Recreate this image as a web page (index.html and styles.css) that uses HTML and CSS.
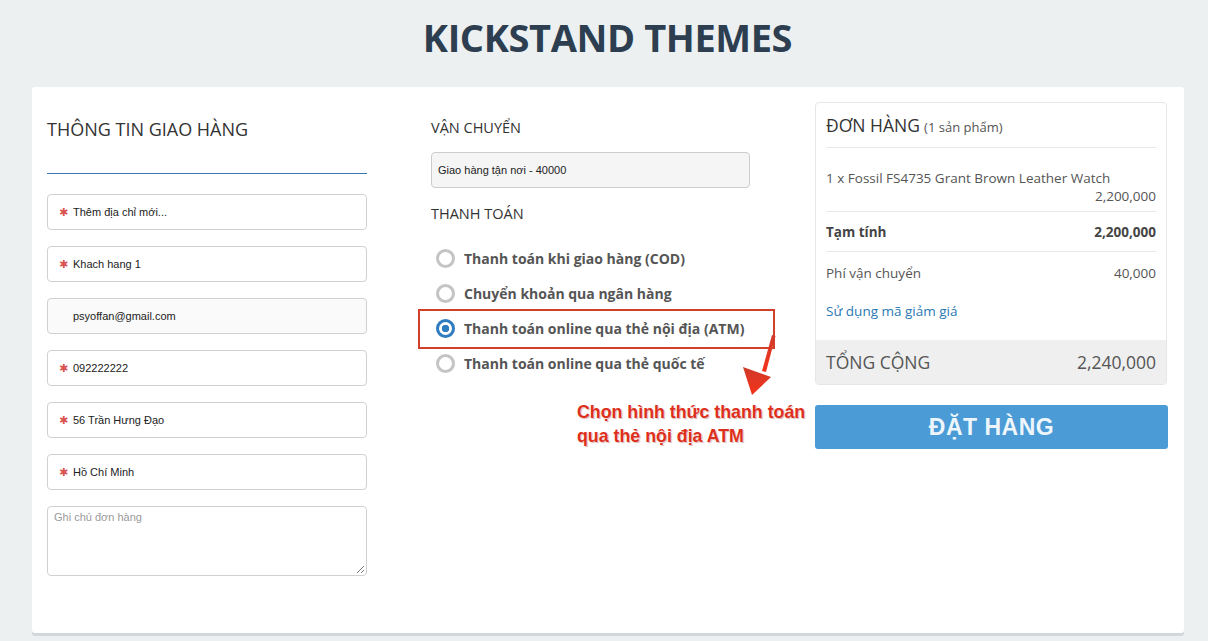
FILE: index.html
```html
<!DOCTYPE html>
<html lang="vi">
<head>
<meta charset="utf-8">
<title>Kickstand Themes - Checkout</title>
<link rel="stylesheet" href="styles.css">
</head>
<body>
<header class="site-header">
  <h1 class="site-title">KICKSTAND THEMES</h1>
</header>
<main class="card">
  <section class="col col-shipping">
    <h2 class="col-heading underlined">THÔNG TIN GIAO HÀNG</h2>
    <div class="field"><span class="req">✱</span><span class="val">Thêm địa chỉ mới...</span></div>
    <div class="field"><span class="req">✱</span><span class="val">Khach hang 1</span></div>
    <div class="field readonly"><span class="req blank"></span><span class="val">psyoffan@gmail.com</span></div>
    <div class="field"><span class="req">✱</span><span class="val">092222222</span></div>
    <div class="field"><span class="req">✱</span><span class="val">56 Trần Hưng Đạo</span></div>
    <div class="field"><span class="req">✱</span><span class="val">Hồ Chí Minh</span></div>
    <div class="textarea"><span class="placeholder">Ghi chú đơn hàng</span><span class="grip"></span></div>
  </section>

  <section class="col col-method">
    <h3 class="sub-heading">VẬN CHUYỂN</h3>
    <div class="select">Giao hàng tận nơi - 40000</div>
    <h3 class="sub-heading pay">THANH TOÁN</h3>
    <ul class="radios">
      <li class="radio"><span class="dot"></span>Thanh toán khi giao hàng (COD)</li>
      <li class="radio"><span class="dot"></span>Chuyển khoản qua ngân hàng</li>
      <li class="radio checked"><span class="dot"></span>Thanh toán online qua thẻ nội địa (ATM)</li>
      <li class="radio"><span class="dot"></span>Thanh toán online qua thẻ quốc tế</li>
    </ul>
  </section>

  <section class="col col-order">
    <div class="order">
      <div class="order-body">
        <div class="order-title"><span class="big">ĐƠN HÀNG</span> <span class="small">(1 sản phẩm)</span></div>
        <div class="line item">
          <div>1 x Fossil FS4735 Grant Brown Leather Watch</div>
          <div class="right">2,200,000</div>
        </div>
        <div class="line row bold"><span>Tạm tính</span><span>2,200,000</span></div>
        <div class="line row ship"><span>Phí vận chuyển</span><span>40,000</span></div>
        <div class="coupon">Sử dụng mã giảm giá</div>
      </div>
      <div class="total"><span>TỔNG CỘNG</span><span>2,240,000</span></div>
    </div>
    <button class="btn-order">ĐẶT HÀNG</button>
  </section>

  <div class="annot-box"></div>
  <svg class="annot-arrow" width="60" height="75" viewBox="0 0 60 75">
    <defs>
      <linearGradient id="ag" x1="0" y1="0" x2="0" y2="1">
        <stop offset="0" stop-color="#cf3b2a"/>
        <stop offset="1" stop-color="#f5321a"/>
      </linearGradient>
    </defs>
    <path d="M42 5 L45.5 6 L36 42 L32 41 Z" fill="url(#ag)"/>
    <path d="M13 37 L41 47 L22 65 Z" fill="url(#ag)"/>
  </svg>
  <p class="annot-text">Chọn hình thức thanh toán<br>qua thẻ nội địa ATM</p>
</main>
</body>
</html>
```
FILE: styles.css
```css
* { box-sizing: border-box; }
html, body { margin: 0; padding: 0; }
body {
  background: #ecf0f1;
  font-family: "Open Sans", "Noto Sans", sans-serif;
  color: #333;
  width: 1208px;
  height: 641px;
  overflow: hidden;
}
.site-header {
  height: 87px;
  display: flex;
  justify-content: center;
  align-items: flex-start;
  padding-left: 7px;
}
.site-title {
  margin: 11px 0 0;
  font-size: 38px;
  line-height: 52px;
  font-weight: 700;
  color: #2c3e50;
  letter-spacing: -0.4px;
}
.card {
  position: relative;
  margin: 0 24px 0 32px;
  height: 546px;
  background: #fff;
  border-radius: 3px;
  box-shadow: 0 3px 0 #d2d7db;
  display: grid;
  grid-template-columns: 320px 319px 353px;
  column-gap: 64px;
  padding: 15px 16px 0 15px;
  align-items: start;
}
.col-order { margin-left: 1px; }

/* left column */
.col-heading {
  margin: 13px 0 0;
  font-size: 18px;
  line-height: 28px;
  font-weight: 400;
  color: #333;
}
.underlined {
  padding-bottom: 30px;
  border-bottom: 1px solid #3a7ab2;
  margin-bottom: 20px;
}
.field {
  height: 36px;
  border: 1px solid #d0d0d0;
  border-radius: 4px;
  display: flex;
  align-items: center;
  padding-left: 10px;
  margin-bottom: 16px;
  font-family: "Liberation Sans", Arial, sans-serif;
  font-size: 11px;
  color: #222;
  background: #fff;
}
.field.readonly { background: #fafafa; }
.req {
  color: #d9534f;
  width: 15px;
  font-size: 11px;
  line-height: 1;
  padding-left: 1px;
  font-family: "DejaVu Sans", sans-serif;
}
.textarea {
  position: relative;
  height: 70px;
  border: 1px solid #d0d0d0;
  border-radius: 4px;
  padding: 4px 6px;
  font-family: "Liberation Sans", Arial, sans-serif;
  font-size: 11px;
  color: #9a9a9a;
}
.grip {
  position: absolute;
  right: 2px;
  bottom: 2px;
  width: 7px;
  height: 7px;
  background: linear-gradient(135deg, transparent 45%, #777 45%, #777 55%, transparent 55%, transparent 75%, #777 75%, #777 85%, transparent 85%);
}

/* middle column */
.sub-heading {
  margin: 15px 0 0;
  font-size: 14.5px;
  line-height: 22px;
  font-weight: 400;
  color: #333;
}
.select {
  margin-top: 13px;
  height: 36px;
  width: 319px;
  background: #f5f5f5;
  border: 1px solid #ccc;
  border-radius: 4px;
  display: flex;
  align-items: center;
  padding-left: 6px;
  font-family: "Liberation Sans", Arial, sans-serif;
  font-size: 11px;
  color: #222;
}
.sub-heading.pay { margin-top: 15px; }
.radios {
  list-style: none;
  margin: 16px 0 0;
  padding: 0 0 0 5px;
}
.radio {
  height: 35px;
  display: flex;
  align-items: center;
  gap: 9px;
  font-weight: 700;
  font-size: 14px;
  color: #555;
}
.dot {
  width: 19px;
  height: 19px;
  border-radius: 50%;
  border: 3px solid #c4c4c4;
  background: #fff;
  flex: none;
}
.radio.checked .dot {
  border: 3px solid #2f7cc1;
  background: radial-gradient(circle, #2f7cc1 0 3.5px, #fff 4px);
}

/* right column */
.order {
  border: 1px solid #e6e6e6;
  border-radius: 4px;
  overflow: hidden;
}
.order-body { padding: 10px 10px 0; }
.order-title {
  height: 35px;
  border-bottom: 1px solid #e8e8e8;
  line-height: 24px;
}
.order-title .big { font-size: 17.5px; color: #333; }
.order-title .small { font-size: 13px; color: #555; }
.line { border-bottom: 1px solid #e8e8e8; font-size: 13.5px; color: #555; }
.item { padding: 21px 0 6px; line-height: 18px; }
.right { text-align: right; }
.row {
  height: 40px;
  display: flex;
  justify-content: space-between;
  align-items: center;
  padding-top: 1px;
}
.row.bold { font-weight: 700; color: #444; }
.row.ship { border-bottom: none; }
.coupon {
  height: 48px;
  display: flex;
  align-items: center;
  font-size: 13.5px;
  color: #2b79b4;
  padding-bottom: 10px;
}
.total {
  height: 44px;
  background: #efefef;
  display: flex;
  justify-content: space-between;
  align-items: center;
  padding: 0 10px;
  font-size: 17.5px;
  color: #555;
}
.btn-order {
  margin-top: 20px;
  width: 353px;
  height: 44px;
  border: none;
  border-radius: 3px;
  background: #4a9bd6;
  color: #eef6fc;
  font-family: "Liberation Sans", Arial, sans-serif;
  font-weight: 700;
  font-size: 23px;
  letter-spacing: 0.5px;
  padding: 0;
}

/* annotation overlays */
.annot-box {
  position: absolute;
  left: 386px;
  top: 222px;
  width: 357px;
  height: 40px;
  border: 2px solid #d2402c;
}
.annot-arrow {
  position: absolute;
  left: 698px;
  top: 243px;
}
.annot-text {
  position: absolute;
  left: 545px;
  top: 313px;
  margin: 0;
  font-family: "Liberation Sans", Arial, sans-serif;
  font-weight: 700;
  font-size: 17.8px;
  line-height: 24px;
  color: #de2f1b;
  text-shadow: 0 0 2px #fff, 1px 1px 1px rgba(120,0,0,0.35);
}
```
